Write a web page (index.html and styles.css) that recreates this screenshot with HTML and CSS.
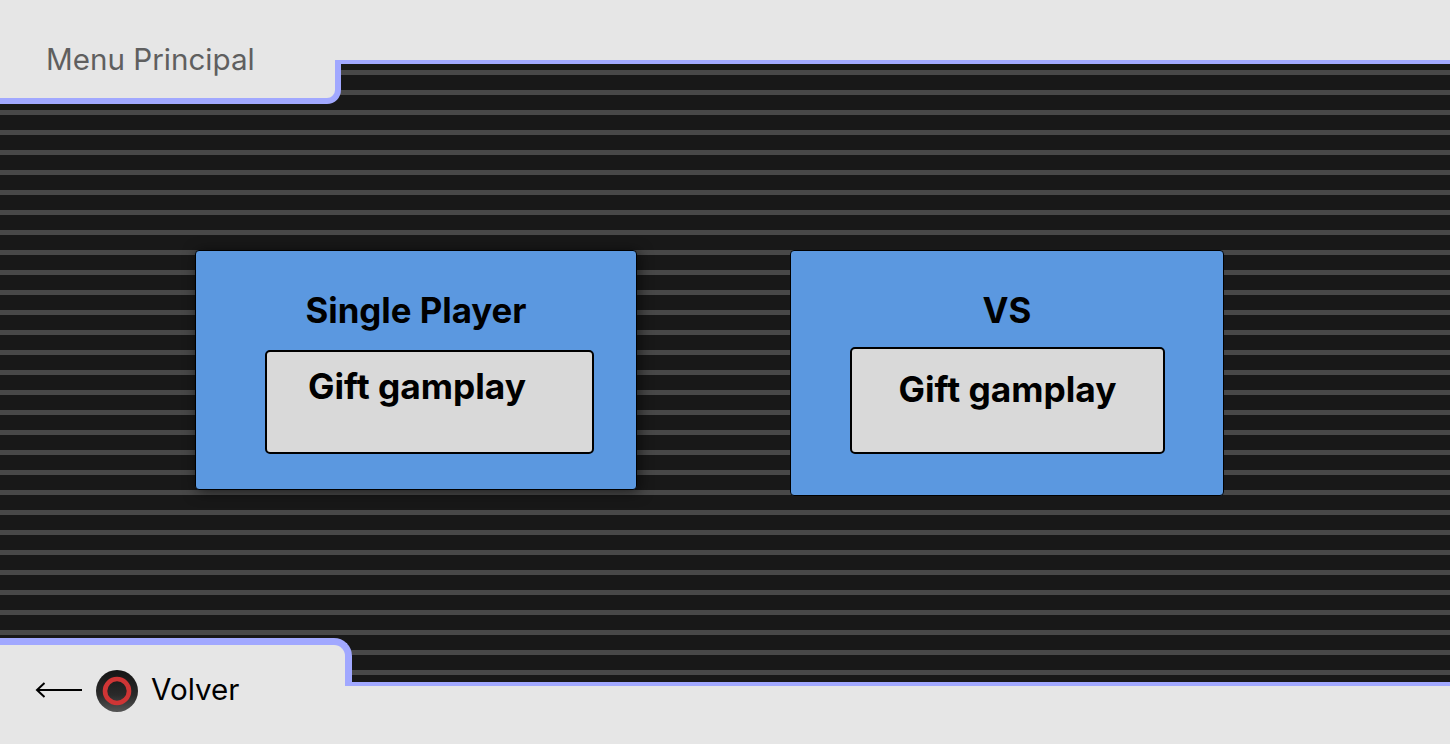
FILE: index.html
```html
<!DOCTYPE html>
<html>
<head>
  <meta charset="utf-8">
  <title>Menu Principal</title>
  <link rel="stylesheet" href="styles.css">
</head>
<body>

  <div class="stage">
    <div class="top-tab"><span class="top-label">Menu Principal</span></div>

    <div class="card card-single">
      <div class="card-title">Single Player</div>
      <div class="gift gift-single">Gift gamplay</div>
    </div>

    <div class="card card-vs">
      <div class="card-title">VS</div>
      <div class="gift gift-vs">Gift gamplay</div>
    </div>

    <div class="back-tab">
      <svg class="back-arrow" width="48" height="18" viewBox="0 0 48 18">
        <path d="M47 9H2M9.5 2L2 9l7.5 7" fill="none" stroke="#000" stroke-width="2"/>
      </svg>
      <svg class="back-button" width="42" height="42" viewBox="0 0 42 42">
        <defs>
          <linearGradient id="btn" x1="0" y1="0" x2="0" y2="1">
            <stop offset="0" stop-color="#151515"/>
            <stop offset="0.6" stop-color="#2a2a2a"/>
            <stop offset="1" stop-color="#555"/>
          </linearGradient>
        </defs>
        <circle cx="21" cy="21" r="21" fill="url(#btn)"/>
        <circle cx="21" cy="21" r="12" fill="none" stroke="#cf3535" stroke-width="4.6"/>
      </svg>
      <span class="back-label">Volver</span>
    </div>
  </div>

</body>
</html>
```

FILE: styles.css
```css
body {
  box-sizing: border-box;
  margin: 0;
  height: 744px;
  padding-top: 60px;
  overflow: hidden;
  background: #e6e6e6;
  font-family: "Inter", "Liberation Sans", sans-serif;
  color: #000;
}

.stage {
  box-sizing: border-box;
  height: 626px;
  position: relative;
  padding: 186px 0 0 195px;
  display: flex;
  align-items: flex-start;
  gap: 153px;
  border-top: 4px solid #a1a8ff;
  border-bottom: 4px solid #a1a8ff;
  background-color: #181818;
  background-image: repeating-linear-gradient(to bottom, #181818 0, #181818 6px, #484848 6px, #484848 11px, #181818 11px, #181818 20px);
}

.card {
  box-sizing: border-box;
  background: #5b98e0;
  border: 1px solid #000;
  border-radius: 4px;
  display: flex;
  flex-direction: column;
}
.card-single {
  width: 442px;
  height: 240px;
  box-shadow: 2px 2px 14px rgba(0, 0, 0, 0.6);
}
.card-vs {
  width: 434px;
  height: 246px;
}
.card-title {
  font-size: 34.8px;
  font-weight: 700;
  line-height: 40px;
  margin-top: 39px;
  text-align: center;
}

.gift {
  box-sizing: border-box;
  background: #d9d9d9;
  border: 2px solid #000;
  border-radius: 5px;
  font-size: 35.3px;
  font-weight: 700;
  line-height: 40px;
}
.gift-single {
  width: 329px;
  height: 104px;
  margin: 20px 0 0 69px;
  padding: 15px 0 0 41px;
}
.gift-vs {
  width: 315px;
  height: 107px;
  margin: 17px 0 0 59px;
  padding: 21px 0 0;
  text-align: center;
}

/* both tabs sit over the stage and cover its corners */
.top-tab {
  box-sizing: border-box;
  position: absolute;
  top: -4px;
  left: 0;
  width: 341px;
  height: 44px;
  padding-left: 46px;
  background: #e6e6e6;
  border-right: 6px solid #a1a8ff;
  border-bottom: 6px solid #a1a8ff;
  border-bottom-right-radius: 14px;
}
.top-label {
  display: block;
  margin-top: -20px;
  font-size: 29.6px;
  line-height: 38px;
  color: #5f5f5f;
}

.back-tab {
  box-sizing: border-box;
  position: absolute;
  left: 0;
  bottom: -4px;
  width: 352px;
  height: 48px;
  padding: 24px 0 0 35px;
  background: #e6e6e6;
  border-top: 7px solid #a1a8ff;
  border-right: 7px solid #a1a8ff;
  border-top-right-radius: 18px;
  display: flex;
  align-items: flex-start;
}
.back-arrow {
  flex: none;
  margin: 12px 13px 0 0;
}
.back-button {
  flex: none;
  margin-top: 1px;
}
.back-label {
  margin-left: 13px;
  font-size: 29.6px;
  line-height: 40px;
}
```
